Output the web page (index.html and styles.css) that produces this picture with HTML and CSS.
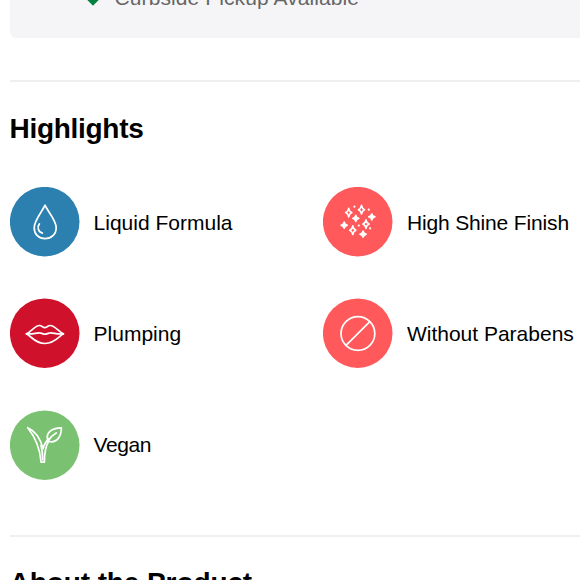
FILE: index.html
```
<!DOCTYPE html>
<html lang="en">
<head>
<meta charset="utf-8">
<title>Product highlights</title>
<link rel="stylesheet" href="styles.css">
</head>
<body>
<main class="page">
  <div class="pickup">
    <svg class="check" viewBox="0 0 20 20"><path d="M3.500 10 10 16.500 20 6.500" /></svg>
    <span>Curbside Pickup Available</span>
  </div>
  <section class="section highlights">
    <h2 class="title tight">Highlights</h2>
    <ul class="grid">
      <li class="item">
        <svg class="icon" viewBox="4.600 6.600 70 70">
          <circle class="blue" cx="39.300" cy="41.300" r="34.800"/>
          <path d="M39.600 24.800C37 31 28.800 40 28.800 47.300C28.800 54 33.500 58.300 39.600 58.300C45.800 58.300 50.800 54 50.800 47.300C50.800 40 42.300 31 39.600 24.800Z"/>
          <path d="M34 43.500C31.500 46.500 32.800 51.800 37 52.700"/>
        </svg>
        <span>Liquid Formula</span>
      </li>
      <li class="item">
        <svg class="icon" viewBox="4.600 6.600 70 70">
          <defs>
            <path id="star" d="M0-4.300C.5-1.800 1.200-.7 3.100 0C1.200.7.5 1.800 0 4.300C-.5 1.800-1.200.7-3.100 0C-1.200-.7-.5-1.800 0-4.300Z"/>
            <path id="spark" d="M0-3.200C.4-1.200.8-.5 3.200 0C.8.5.4 1.200 0 3.200C-.4 1.200-.8.5-3.200 0C-.8-.5-.4-1.200 0-3.200Z"/>
          </defs>
          <circle class="coral" cx="39.300" cy="41.300" r="34.800"/>
          <g class="stars">
            <use href="#star" x="30.300" y="32.200"/><use href="#star" x="43.100" y="29.300"/>
            <use href="#star" x="47.600" y="43.700"/><use href="#star" x="34.400" y="49.800"/>
          </g>
          <g class="sparks">
            <use href="#spark" x="53.400" y="36.400"/><use href="#spark" x="37.400" y="38"/>
            <use href="#spark" x="25.800" y="44.800"/><use href="#spark" x="44.700" y="53.800"/>
          </g>
          <g class="dots">
            <circle cx="36" cy="26.300" r="1.100"/><circle cx="50.400" cy="29.300" r="1.100"/>
            <circle cx="40.400" cy="45.100" r="1.100"/><circle cx="51.700" cy="48" r="1.100"/>
          </g>
        </svg>
        <span class="narrow">High Shine Finish</span>
      </li>
      <li class="item">
        <svg class="icon" viewBox="4.600 4.800 70 70">
          <circle class="red" cx="39.300" cy="40" r="34.800"/>
          <path d="M21 40.600C26 38.500 29.500 32.300 34 32.300C36.500 32.300 37.500 34.500 39.300 34.500C41.200 34.500 42.300 32.300 44.800 32.300C49.500 32.300 53 38.500 58 40.600C53.500 43 49.500 50.300 39.500 50.300C29.500 50.300 26 43 21 40.600Z"/>
          <path d="M21 40.600C27 41.400 31 39.500 34 39.700C36.500 39.800 37.500 41 39.500 41C41.500 41 42.500 39.800 45 39.700C48 39.500 52 41.400 58 40.600"/>
        </svg>
        <span>Plumping</span>
      </li>
      <li class="item">
        <svg class="icon" viewBox="4.600 4.800 70 70">
          <circle class="coral" cx="39.300" cy="40" r="34.800"/>
          <circle cx="39.500" cy="40.300" r="16.900"/>
          <path d="M51.400 28.400 27.600 52.200"/>
        </svg>
        <span>Without Parabens</span>
      </li>
      <li class="item">
        <svg class="icon" viewBox="4.600 4.800 70 70">
          <circle class="green" cx="39.300" cy="40" r="34.800"/>
          <path d="M22.300 22.500C29.500 25.500 35 33.500 37.700 43.500C38.500 39.500 40.500 36.500 43.500 33.500M22.300 22.500C30 32 34.500 42 35.700 57H39C39 49 40 41.500 43.200 36"/>
          <path d="M37.300 54.500C37.200 49 36.800 44.500 35.600 40"/>
          <path d="M43 36C39 28 46 22.800 56 22.600C56 31 51.500 38.700 43 36ZM43 35.500C45 32 47.500 29.500 50.800 27.700"/>
        </svg>
        <span class="vegan">Vegan</span>
      </li>
    </ul>
  </section>
  <section class="section about">
    <h2 class="title">About the Product</h2>
  </section>
</main>
</body>
</html>
```
FILE: styles.css
```
* {
  box-sizing: border-box;
}

html,
body {
  height: 100%;
  margin: 0;
  overflow: hidden;
}

body {
  background: #fff;
  color: #000;
  font: 21px/24px "Liberation Sans", Arial, sans-serif;
}

.page {
  display: flow-root;
  padding-left: 9.6px;
}

/* The panel continues above the top of the viewport. */
.pickup {
  display: flex;
  gap: 12px;
  height: 72px;
  margin: -34px -10px 42px 0;
  padding: 20px 0 28px 73px;
  border-radius: 6px;
  background: #f5f5f8;
  color: #666;
  letter-spacing: 0.080px;
}

.check {
  width: 20px;
  height: 20px;
  fill: none;
  stroke: #00813f;
  stroke-width: 4.500;
}

.section {
  border-top: 2px solid #efefef;
}

.highlights {
  height: 455px;
  padding-top: 31px;
}

.about {
  padding-top: 30px;
}

.title {
  margin: 0;
  font-size: 28px;
  font-weight: 700;
  line-height: 32px;
  letter-spacing: -0.100px;
}

.tight {
  letter-spacing: -0.300px;
}

.grid {
  display: grid;
  grid-template-columns: 313.300px auto;
  row-gap: 41.400px;
  margin: 42px 0 0;
  padding: 0;
  list-style: none;
}

.item {
  display: flex;
  align-items: center;
  gap: 14px;
  white-space: nowrap;
}

.item span {
  padding-top: 1px;
}

.narrow {
  letter-spacing: -0.150px;
}

.vegan {
  letter-spacing: -0.450px;
}

.icon {
  flex: none;
  width: 70px;
  height: 70px;
  fill: none;
  stroke: #fff;
  stroke-width: 1.700;
  stroke-linecap: round;
  stroke-linejoin: round;
}

.blue,
.coral,
.red,
.green {
  stroke: none;
}

.blue {
  fill: #2b80b0;
}

.coral {
  fill: #ff595b;
}

.red {
  fill: #cf112c;
}

.green {
  fill: #7ac271;
}

.stars {
  stroke-width: 1.600;
}

.sparks {
  fill: #fff;
  stroke-width: 1.400;
}

.dots {
  fill: #fff;
  stroke: none;
}
```
